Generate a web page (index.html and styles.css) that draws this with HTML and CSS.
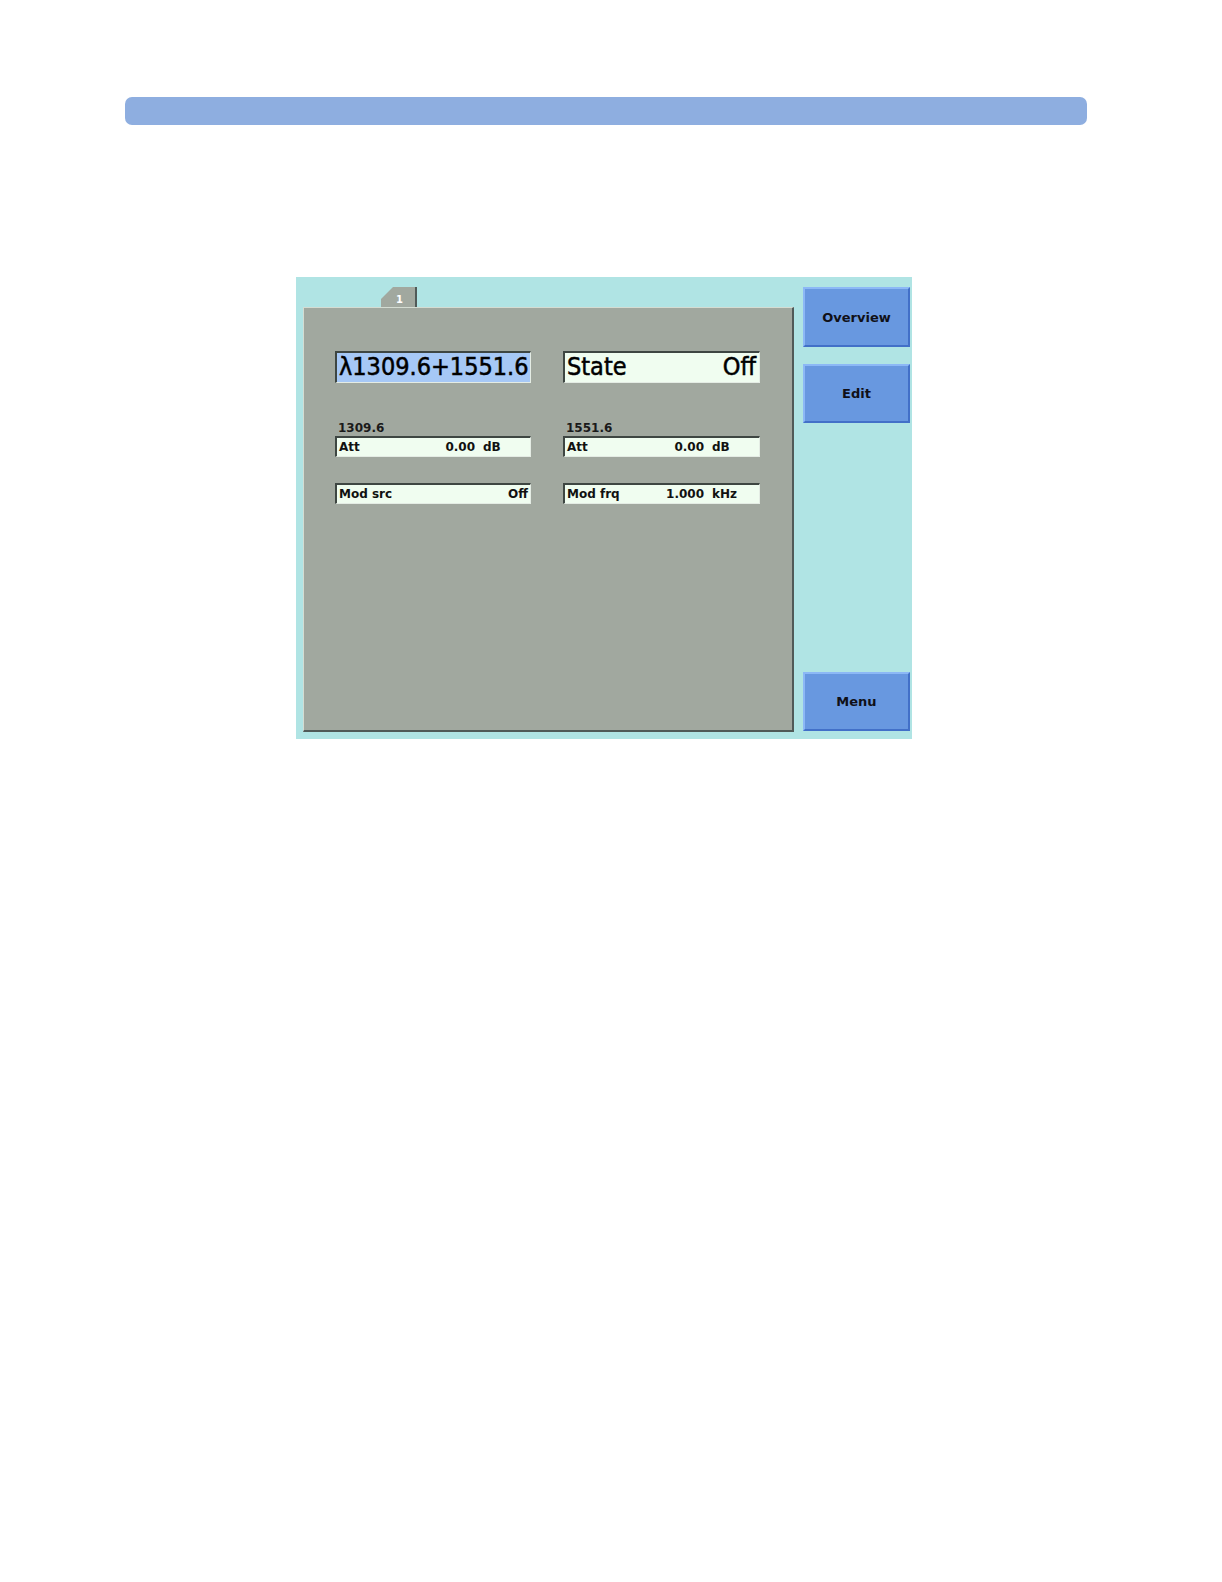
FILE: index.html
```html
<!DOCTYPE html>
<html>
<head>
<meta charset="utf-8">
<link rel="stylesheet" href="styles.css">
</head>
<body>
<div class="header"></div>
<div class="screen">
  <div class="left">
    <div class="tabrow"><div class="tab"><span>1</span></div></div>
    <div class="panel">
      <div class="grid">
        <div class="bigbox sel">λ1309.6+1551.6</div>
        <div class="bigbox"><span>State</span><span>Off</span></div>
        <div class="field">
          <div class="label">1309.6</div>
          <div class="box"><span class="name">Att</span><span class="val">0.00</span><span class="unit">dB</span></div>
        </div>
        <div class="field">
          <div class="label">1551.6</div>
          <div class="box"><span class="name">Att</span><span class="val">0.00</span><span class="unit">dB</span></div>
        </div>
        <div class="field low">
          <div class="box"><span class="name">Mod src</span><span class="val end">Off</span></div>
        </div>
        <div class="field low">
          <div class="box"><span class="name">Mod frq</span><span class="val">1.000</span><span class="unit">kHz</span></div>
        </div>
      </div>
    </div>
  </div>
  <div class="buttons">
    <div class="btn b1">Overview</div>
    <div class="btn b2">Edit</div>
    <div class="btn b3">Menu</div>
  </div>
</div>
</body>
</html>
```
FILE: styles.css
```css
body {
  margin: 0;
  background: #ffffff;
  font-family: "DejaVu Sans", sans-serif;
}
.header {
  margin: 97px 0 0 125px;
  width: 962px;
  height: 28px;
  border-radius: 7px;
  background: #8eaee0;
}
.screen {
  margin: 152px 0 0 296px;
  width: 616px;
  height: 462px;
  box-sizing: border-box;
  padding: 8px 2px 7px 7px;
  background: #b0e4e4;
  display: flex;
}
.left {
  width: 491px;
  display: flex;
  flex-direction: column;
}
.tabrow {
  height: 22px;
  padding-left: 78px;
  display: flex;
  align-items: flex-end;
}
.tab {
  width: 36px;
  height: 20px;
  box-sizing: border-box;
  background: #a1a89f;
  border-right: 2px solid #505a58;
  clip-path: polygon(0 12px, 12px 0, 100% 0, 100% 100%, 0 100%);
  color: #ffffff;
  font-size: 10px;
  font-weight: bold;
  text-align: center;
  line-height: 26px;
}
.tab span { margin-left: 3px; }
.panel {
  flex: 1;
  background: #a1a89f;
  border-top: 1px solid #d4dcd2;
  border-left: 1px solid #d4dcd2;
  border-right: 2px solid #505a58;
  border-bottom: 2px solid #505a58;
  padding: 43px 0 0 31px;
}
.grid {
  display: grid;
  grid-template-columns: 196px 197px;
  column-gap: 32px;
}
.bigbox {
  height: 32px;
  box-sizing: border-box;
  border-top: 2px solid #3e4642;
  border-left: 2px solid #3e4642;
  border-right: 1px solid #e4ece4;
  border-bottom: 1px solid #e4ece4;
  background: #f0fdf0;
  font-family: "DejaVu Sans Condensed", "DejaVu Sans", sans-serif;
  font-size: 25px;
  line-height: 28px;
  color: #000;
  padding: 0 3px 0 2px;
  display: flex;
  justify-content: space-between;
  -webkit-text-stroke: 0.5px #000;
  white-space: nowrap;
}
.bigbox.sel {
  background: #a6c8f6;
}
.field {
  margin-top: 38px;
}
.field.low {
  margin-top: 26px;
}
.label {
  font-size: 12px;
  font-weight: bold;
  line-height: 14px;
  color: #1a1a1a;
  padding-left: 3px;
  margin-bottom: 1px;
}
.box {
  height: 21px;
  box-sizing: border-box;
  border-top: 2px solid #3e4642;
  border-left: 2px solid #3e4642;
  border-right: 1px solid #e4ece4;
  border-bottom: 1px solid #e4ece4;
  background: #f0fdf0;
  font-size: 12px;
  font-weight: bold;
  line-height: 19px;
  color: #111;
  padding-left: 2px;
  display: flex;
}
.box .name { flex: 1; }
.box .val { margin-right: 8px; }
.box .val.end { margin-right: 2px; }
.box .unit { width: 47px; }
.buttons {
  width: 107px;
  margin-left: 9px;
  padding-top: 2px;
  padding-bottom: 1px;
  display: flex;
  flex-direction: column;
}
.btn {
  box-sizing: border-box;
  background: #6898e0;
  border-top: 2px solid #8cb8f6;
  border-left: 2px solid #8cb8f6;
  border-right: 2px solid #4270c8;
  border-bottom: 2px solid #4270c8;
  font-size: 13px;
  font-weight: bold;
  color: #101018;
  display: flex;
  align-items: center;
  justify-content: center;
}
.b1 { height: 60px; }
.b2 { height: 59px; margin-top: 17px; }
.b3 { height: 59px; margin-top: auto; }
```
